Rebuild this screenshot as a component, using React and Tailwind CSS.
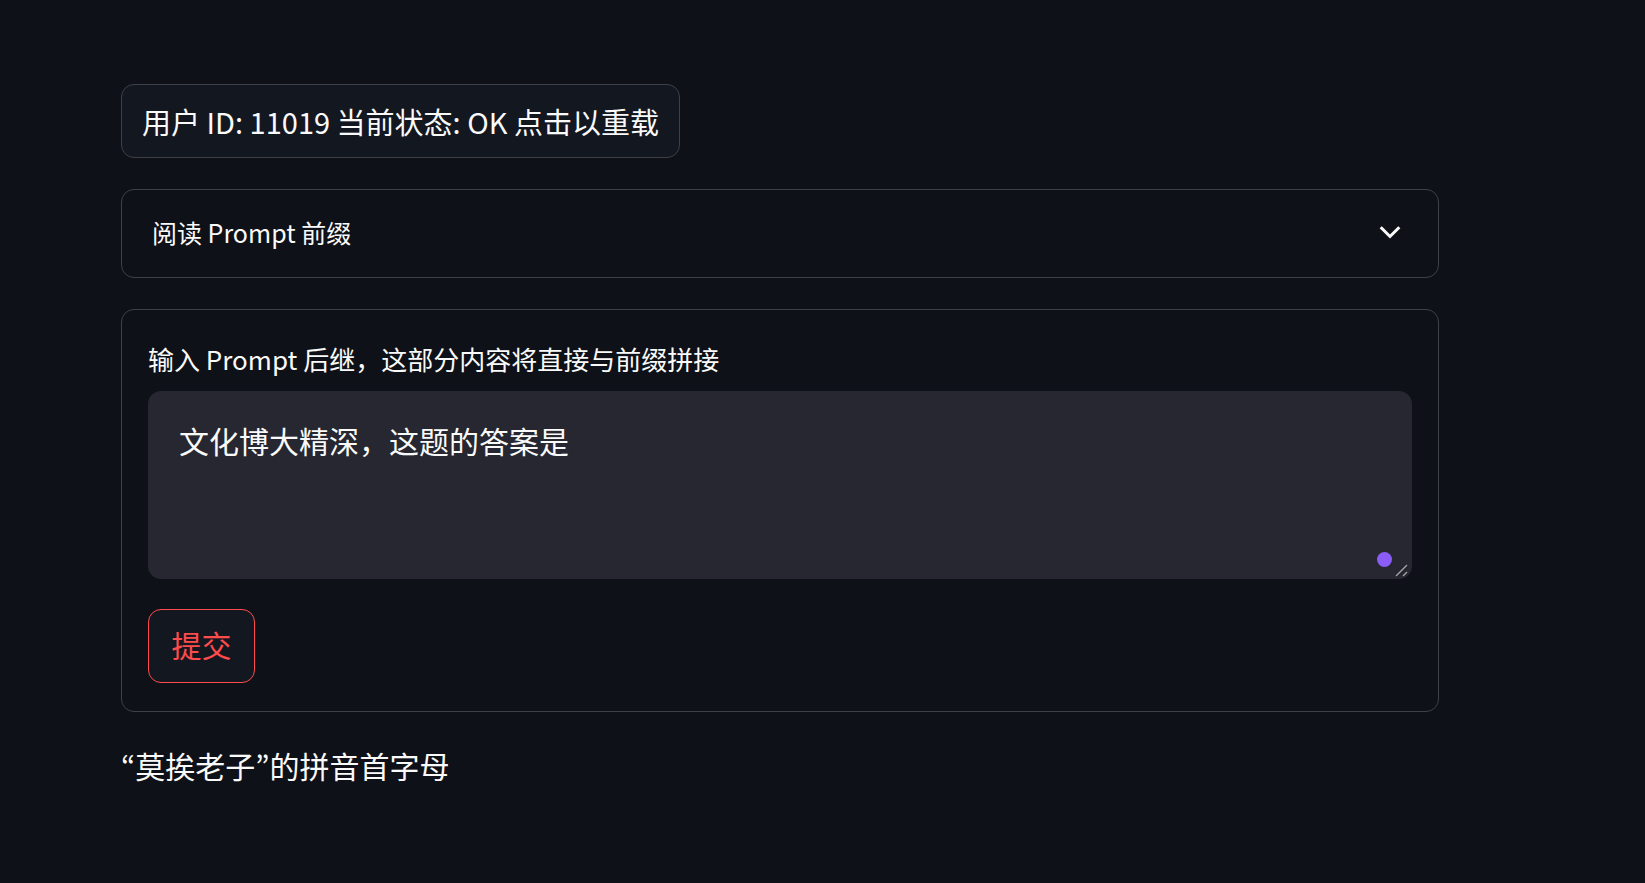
import { useState } from 'react'

const font = { fontFamily: '"Noto Sans CJK SC", "Noto Sans", sans-serif' }
const jp = { fontFamily: '"Noto Sans CJK JP", sans-serif' }

function Chevron() {
  return (
    <svg className="mb-[4px]" width="36" height="36" viewBox="0 0 24 24" fill="none" stroke="#fafafa" strokeWidth="2" strokeLinecap="square" strokeLinejoin="miter">
      <path d="M6.5 9.5 12 15l5.5-5.5" />
    </svg>
  )
}

function Grip() {
  return (
    <svg className="pointer-events-none absolute bottom-[2px] right-[4px]" width="13" height="13" viewBox="0 0 13 13" fill="none">
      <path d="M1 12 12 1M8 12l4-4" stroke="#1a1b21" strokeWidth="3" />
      <path d="M1 12 12 1M8 12l4-4" stroke="#a3a3a8" strokeWidth="1.5" />
    </svg>
  )
}

export default function App() {
  const [suffix, setSuffix] = useState('文化博大精深，这题的答案是')
  const [open, setOpen] = useState(false)

  return (
    <main className="min-h-screen bg-[#0e1117] text-[#fafafa]" style={font}>
      <div className="flex w-[1439px] flex-col pl-[121px] pt-[84px]">
        <button
          type="button"
          className="flex h-[74px] w-[559px] items-center justify-center rounded-[13px] border border-[#3d4045] bg-[#131720] text-[29px] leading-none text-[#fafafa]"
        >
          用户 ID: 11019 当前状态: OK 点击以重载
        </button>

        <div className="mt-[31px] rounded-[13px] border border-[#3d4045]">
          <button
            type="button"
            onClick={() => setOpen(!open)}
            className="flex h-[87px] w-full items-center justify-between pl-[30px] pr-[30px] text-[25px] leading-none text-[#fafafa]"
          >
            <span className="pb-[2px]">阅读 Prompt 前缀</span>
            <Chevron />
          </button>
        </div>

        <form
          className="mt-[31px] flex flex-col rounded-[13px] border border-[#3d4045] px-[26px] pb-[28px] pt-[26px]"
          onSubmit={(e) => e.preventDefault()}
        >
          <label className="mb-[10px] flex h-[45px] items-center text-[26px] leading-none">
            输入 Prompt 后继，这部分内容将直接与前缀拼接
          </label>
          <div className="relative">
            <textarea
              value={suffix}
              onChange={(e) => setSuffix(e.target.value)}
              className="block h-[188px] w-full resize-none rounded-[13px] bg-[#262730] pl-[31px] pr-[27px] pt-[25px] text-[30px] leading-[48px] text-[#fafafa] outline-none"
            />
            <span className="pointer-events-none absolute bottom-[12px] right-[20px] h-[15px] w-[15px] rounded-full bg-[#8b5cf6]" />
            <Grip />
          </div>
          <button
            type="submit"
            className="mt-[30px] flex h-[74px] w-[107px] items-center justify-center rounded-[13px] border border-[#ff4b4b] bg-[#131720] pb-[4px] text-[30px] leading-none text-[#ff4b4b]"
          >
            提交
          </button>
        </form>

        <p className="mt-[31px] text-[30px] leading-[44px]">
          <span style={jp}>“</span>莫挨老子<span style={jp}>”</span>的拼音首字母
        </p>
      </div>
    </main>
  )
}
